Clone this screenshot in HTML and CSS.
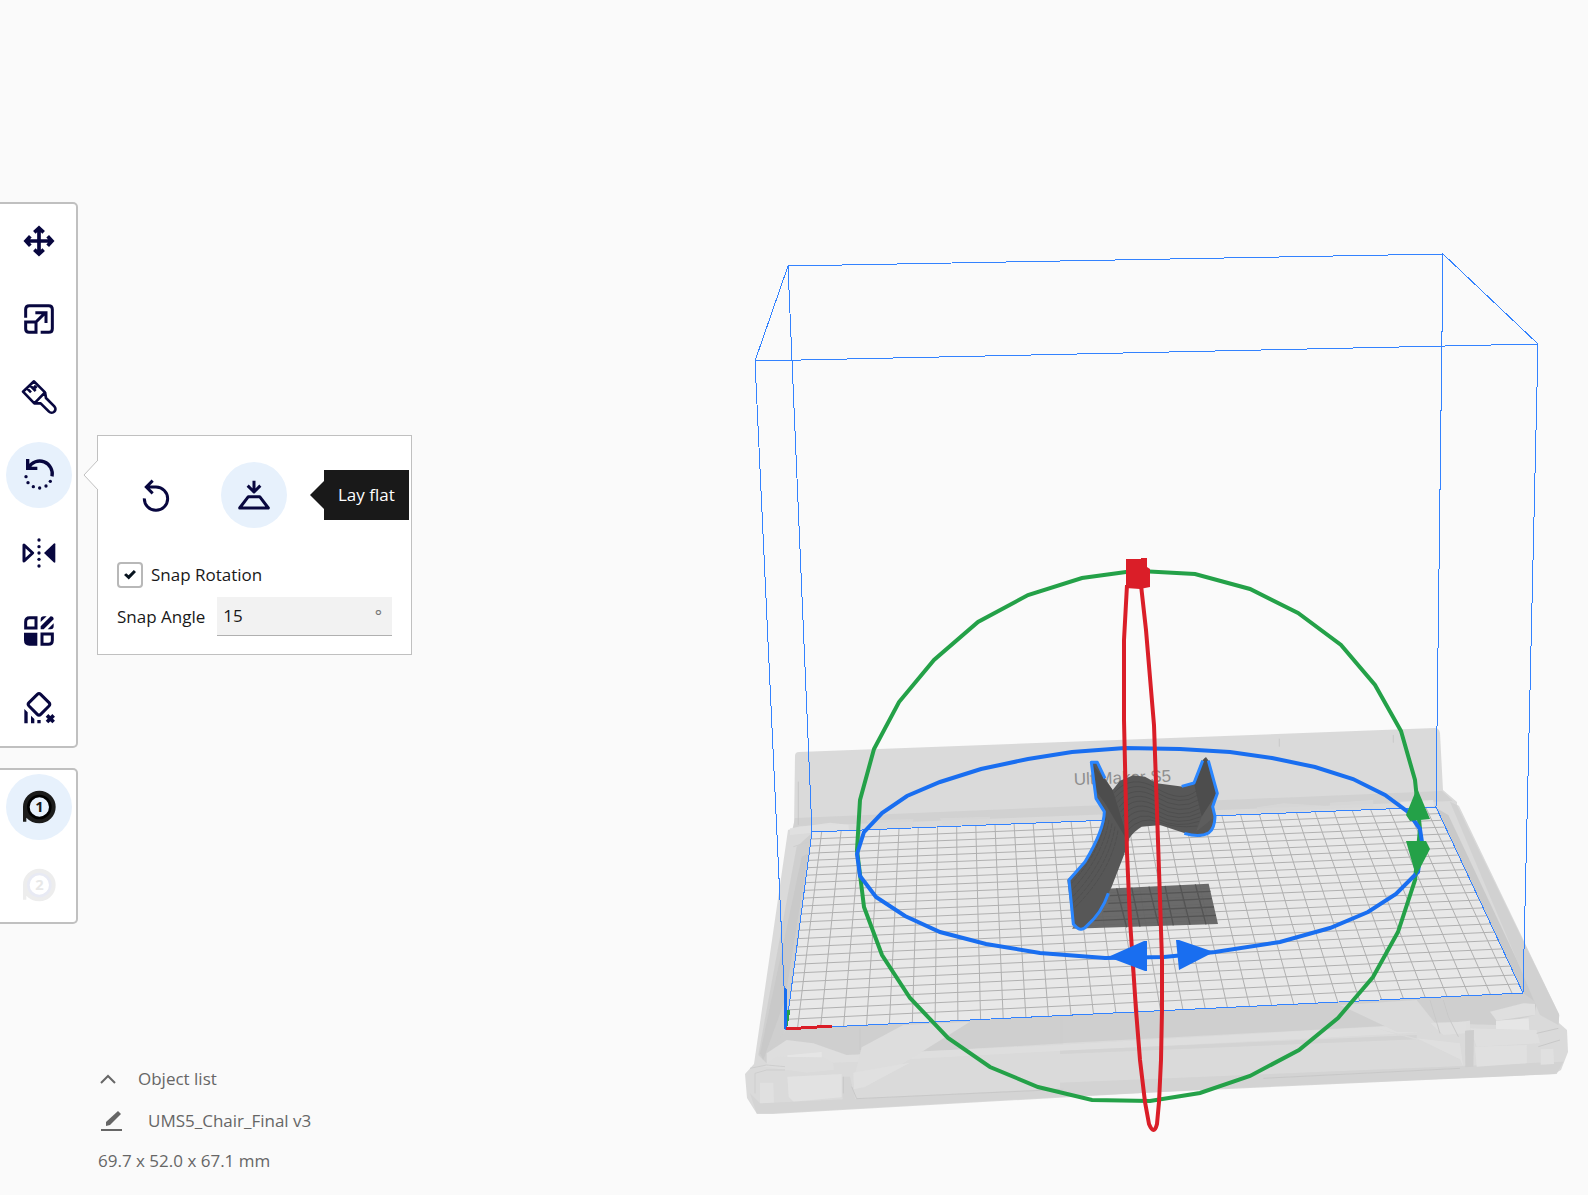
FILE: index.html
```html
<!DOCTYPE html>
<html lang="en">
<head>
<meta charset="utf-8">
<meta name="viewport" content="width=device-width, initial-scale=1">
<title>UMS5_Chair_Final v3</title>
<link rel="stylesheet" href="styles.css">
</head>
<body>
<main class="app">
  <svg class="scene" viewBox="0 0 1588 1195" preserveAspectRatio="xMaxYMid meet" role="img" aria-label="Build plate with model">
    <!-- printer body -->
    <path fill="#dadada" d="M795 756q0-4 4-4L1435 728q4 0 5 5L1443 790 1457 802 1457 812 788 840 794 828Z"/>
    <path fill="#d1d1d1" d="M795 818 1442 791 1452 800 1457 812 790 840Z"/>
    <path fill="#dadada" d="M788 830 800 826 1452 801 1459 806 1559 1014 1559 1023 1567 1030 1568 1052 1561 1070 1554 1074 1230 1088 773 1114 757 1114 747 1098 745 1074 754 1064Z"/>
    <g class="detail" transform="translate(730 700) scale(.33333)">
      <path fill="#cecece" d="M200 440 245 400 170 985 110 1090 85 1065Z"/>
      <path fill="#c7c7c7" d="M215 470 235 460 165 900 100 1080 90 1060Z"/>
      <path fill="#cecece" d="M170 988 1000 946 1000 1030 360 1068 170 1040 110 1060Z"/>
      <path fill="#dfdfdf" d="M110 1060 170 1020 250 1030 350 1065 1000 1034 1000 1052 400 1085 110 1095Z"/>
      <path fill="#e8e8e8" d="M172 1066 275 1056 276 1098 172 1102Z"/>
      <path fill="#e4e4e4" d="M172 1130 335 1122 335 1192 190 1205 176 1190Z"/>
      <path fill="#dedede" d="M280 1072 310 1090 312 1110 230 1118 100 1100 140 1070ZM395 1042 520 975 720 965 400 1165 370 1140Z"/>
      <path fill="#e2e2e2" d="M370 1118 540 1088 405 1160 372 1168ZM90 1148 130 1148 132 1216 90 1218Z"/>
      <path fill="#d3d3d3" d="M60 1180 90 1210 380 1196 1000 1165 1000 1190 130 1240 80 1240ZM338 1130 360 1130 375 1196 338 1200Z"/>
      <path fill="none" stroke="#c6c6c6" stroke-width="3" d="M205 245V375M365 1160 380 1196 1000 1168M340 1130V1180M390 985V1050"/>
      <path fill="#e2e2e2" d="M180 385 300 368 355 374 357 390 250 398 180 405Z"/>
      <path fill="#d8d8d8" d="M410 360 550 358 550 382 420 386ZM630 355 780 350 780 372 640 376Z"/>
      <path fill="none" stroke="#cdcdcd" stroke-width="3" d="M60 1105 110 1095 165 1100M75 1180V1120L110 1110H165M190 440 240 425"/>
    </g>
    <g class="detail" transform="translate(1230 700) scale(.33333)">
      <path fill="#c7c7c7" d="M620 325 655 345 920 905 915 935 880 880Z"/>
      <path fill="#d0d0d0" d="M660 305 680 315 988 945 985 975 930 945Z"/>
      <path fill="#cecece" d="M-510 946 880 880 915 905 915 945 800 975 620 970-510 1030Z"/>
      <path fill="#dfdfdf" d="M-510 1034 660 968 720 962 720 990-510 1054Z"/>
      <path fill="#d2d2d2" d="M-510 1052 560 1005 560 1018-510 1062ZM-510 1148 700 1098 1000 1085 980 1122-510 1190Z"/>
      <path fill="#dadada" d="M330 915 560 900 640 1000 500 995ZM440 985 700 1050 690 1080 560 1020Z"/>
      <path fill="#e9e9e9" d="M798 962 896 955 898 990 798 998Z"/>
      <path fill="#e2e2e2" d="M735 1040 890 1035 890 1090 740 1100ZM932 1048 970 1046 972 1092 932 1094Z"/>
      <path fill="#e0e0e0" d="M560 1015 690 1030 700 1100 690 1078ZM600 968 710 966 710 1000 640 1005ZM780 935 880 910 915 912 915 945 800 962ZM720 985 920 990 930 1030 740 1040Z"/>
      <path fill="#cbcbcb" d="M705 992 732 990 730 1100 706 1102Z"/>
      <path fill="none" stroke="#c6c6c6" stroke-width="3" d="M148 116V140M490 105V128M640 900 655 950 685 1010M600 900 630 1000M100 1135 690 1105M920 1000 985 985M925 1040 990 1020"/>
      <path fill="#d8d8d8" d="M80 322 160 310 300 318 300 308 430 300 430 320 80 336Z"/>
      <path fill="#e6e6e6" d="M510 305 610 300 612 318 520 326Z"/>
    </g>
    <text class="brand" x="1074" y="785" transform="rotate(-2 1074 785)">UltiMaker S5</text>

    <!-- build plate -->
    <path fill="#e8e8e8" d="M812 832 1435 807 1523 993 786 1029Z"/>
    <path id="grid" class="grid"/>
    <g class="volume">
      <path d="M788 266 1443 254 1538 344 755 361ZM812 832 1436 807 1523 993 786 1029ZM788 266 812 832M1443 254 1436 807M1538 344 1523 993M755 361 786 1029"/>
    </g>
    <g class="axes">
      <path stroke="#24a148" d="M786 1026 789 1010"/>
      <path stroke="#196ef0" d="M786 1029 785 988"/>
      <path stroke="#da1e28" d="M786 1029 832 1026"/>
    </g>

    <!-- model -->
    <g transform="translate(1050 720) scale(.33333)">
      <path fill="#636363" fill-opacity=".95" d="M150 507 476 491 504 612 66 626Z"/>
      <path fill="none" stroke="#545454" stroke-width="4" d="M200 505 230 622M245 503 270 620M297 500 326 617M345 498 370 616M390 495 420 614M436 493 468 613M180 527 481 514M175 550 485 536M160 575 492 561M130 602 498 586"/>
      <path fill="#575757" d="M122 124 142 124 165 175 188 210 210 182 250 166 285 170 320 190 400 200 432 190 458 120 468 111 476 122 504 220 490 260 497 290 482 335 450 350 405 340 330 315 275 320Q250 335 238 355L222 405 185 500 140 590 92 630 68 612 52 480 105 425 150 340 165 275 138 235Z"/>
      <path fill="#4d4d4d" d="M130 135 165 180 188 210 230 345 225 350 165 250 140 215ZM465 113 478 130 500 220 455 290 432 190Z"/>
      <path fill="#646464" d="M455 290 497 225 488 262 493 292 438 335Z" opacity=".5"/>
      <path fill="none" stroke="#4a4a4a" stroke-width="2" d="M192 218Q245 160 320 205T440 212M196 232Q248 175 320 218T442 226M201 248Q250 190 320 232T445 240M207 262Q252 205 320 246T447 254M212 276Q255 220 322 260T449 266M217 290Q258 236 322 273T451 278M222 304Q262 252 322 286T453 290M227 318Q268 270 324 298T448 304M231 332Q275 286 326 306T442 318"/>
      <path fill="none" stroke="#4c4c4c" stroke-width="2" stroke-dasharray="14 3" d="M168 290Q150 400 64 490M177 300Q158 410 66 510M186 310Q168 425 68 530M195 320Q176 440 70 548M204 332Q184 455 72 565"/>
      <g class="outline">
        <path d="M165 175 142 127 124 127 138 235 163 275Q162 330 105 425L57 480 70 612Q92 640 110 618 155 580 175 520"/>
        <path d="M395 199 432 189 458 122M475 122 502 220 488 260 495 290Q494 325 477 338 450 354 403 340"/>
      </g>
    </g>

    <!-- rotation gizmo -->
    <g class="ring">
      <path stroke="#24a148" d="M1126 572 1082 578 1028 595 978 622 934 660 899 702 874 749 860 800 857 850 864 907 882 955 910 998 948 1038 990 1067 1038 1087 1092 1100 1150 1101 1200 1093 1250 1076 1299 1050 1338 1018 1373 977 1398 932 1415 880 1420 829 1415 780 1401 731 1375 685 1341 645 1298 613 1250 589 1195 574 1140 571Z"/>
      <path stroke="#196ef0" d="M857 854 864 832 882 813 907 796 940 782 981 769 1028 759 1072 752 1125 748 1180 749 1230 752 1272 758 1315 767 1353 779 1385 795 1408 812 1420 829 1422 842 1418 872 1396 894 1368 912 1330 928 1280 942 1215 952 1164 957 1105 958 1040 953 986 944 940 932 905 916 876 897 860 876Z"/>
      <path stroke="#da1e28" d="M1127 585 1124 640 1124 720 1127 853 1130 920 1136 1010 1140 1060 1145 1102 1149 1124Q1154 1136 1157 1124L1159 1102 1161 1060 1162 1010 1162 960 1159 870 1154 725 1146 630 1141 585"/>
    </g>
    <path fill="#da1e28" d="M1126 559H1141V558H1147V567L1150 569V587L1140 589 1126 588Z"/>
    <path fill="#24a148" d="M1417 788 1430 819 1410 821 1406 815ZM1406 841H1426L1430 849 1416 876Z"/>
    <path fill="#196ef0" d="M1108 957 1144 941H1147V971H1145ZM1176 940H1179L1214 952 1179 970Z"/>
  </svg>

  <div class="workspace">
    <div class="sidebar">
      <nav class="rail" aria-label="Tools">
        <button class="tool" aria-label="Move">
          <svg class="icon" viewBox="0 0 120 120"><path stroke-width="11" d="M60 22V98M22 60H98M46 34 60 21 74 34M46 86 60 99 74 86M34 46 21 60 34 74M86 46 99 60 86 74"/></svg>
        </button>
        <button class="tool" aria-label="Scale">
          <svg class="icon" viewBox="0 0 120 120"><path stroke-width="9" d="M20 56V31Q20 20 31 20H89Q100 20 100 31V89Q100 100 89 100H65M20 69H51V100H30Q20 100 20 90ZM51 69 79 41M49 41H81V72"/></svg>
        </button>
        <button class="tool" aria-label="Paint">
          <svg class="icon" viewBox="0 0 120 120"><path stroke-width="8" stroke-linejoin="round" d="M45 13 12 44 46 79 78 46ZM46 79H65L90 104A11 11 0 0 0 106 88L81 63 78 46M24 34 36 46M33 25 50 42M45 26 53 33"/></svg>
        </button>
        <button class="tool active" aria-label="Rotate">
          <svg class="icon" viewBox="0 0 120 120"><path stroke-width="10" d="M99 64A38 38 0 0 0 29 37M26 12V40H55"/><g class="solid"><circle cx="21" cy="65" r="5"/><circle cx="27" cy="83" r="5"/><circle cx="43" cy="95" r="5"/><circle cx="62" cy="99" r="5"/><circle cx="81" cy="93" r="5"/><circle cx="94" cy="79" r="5"/></g></svg>
        </button>
        <button class="tool" aria-label="Mirror">
          <svg class="icon" viewBox="0 0 120 120"><path stroke-width="9" stroke-linejoin="round" d="M15 36V84L41 60Z"/><g class="solid"><path d="M75 60 104 32Q109 29 109 34V86Q109 91 104 88Z"/><circle cx="60" cy="21" r="5"/><circle cx="60" cy="41" r="5"/><circle cx="60" cy="60" r="5"/><circle cx="60" cy="79" r="5"/><circle cx="60" cy="99" r="5"/></g></svg>
        </button>
        <button class="tool" aria-label="Per model settings">
          <svg class="icon" viewBox="0 0 120 120"><path stroke-width="9" d="M20 32Q20 20 32 20H51V51H20ZM69 69H100V88Q100 100 88 100H69Z"/><path class="solid" d="M15 65H55V104H31Q15 104 15 88ZM65 33V26Q65 16 75 16H83ZM65 46 95 16Q104 16 104 25L74 55H65ZM86 55 104 37V46Q104 55 95 55Z"/></svg>
        </button>
        <button class="tool" aria-label="Support blocker">
          <svg class="icon" viewBox="0 0 120 120"><path stroke-width="9" d="M55 16Q60 11 65 16L90 41Q95 46 90 51L65 76Q60 81 55 76L30 51Q25 46 30 41Z"/><path stroke-width="11" d="M84 79 104 99M104 79 84 99"/><path class="solid" d="M16 60 26 70V103H16ZM36 80 46 90V103H36ZM55 93H65V103H55Z"/></svg>
        </button>
      </nav>
      <nav class="rail" aria-label="Extruders">
        <button class="tool spool active" aria-label="Extruder 1">
          <svg class="icon" viewBox="0 0 120 120"><path class="body" d="M12 60A49 49 0 1 1 61 109Q38 109 22 92V104H12Z"/><circle class="core" cx="61" cy="60" r="33"/><text x="61" y="76">1</text></svg>
        </button>
        <button class="tool spool" aria-label="Extruder 2" disabled>
          <svg class="icon" viewBox="0 0 120 120"><path class="body" d="M12 60A49 49 0 1 1 61 109Q38 109 22 92V104H12Z"/><circle class="core" cx="61" cy="60" r="33"/><text x="61" y="76">2</text></svg>
        </button>
      </nav>
    </div>

    <section class="panel" aria-label="Rotate">
      <svg class="pointer" viewBox="0 0 16 30" aria-hidden="true"><path d="M15 0 1 15 15 30"/></svg>
      <div class="actions">
        <button class="tool" aria-label="Reset">
          <svg class="icon" viewBox="0 0 120 120"><path stroke-width="9" d="M25 70A35 35 0 1 0 60 36H32M50 17 31 36 50 55"/></svg>
        </button>
        <button class="tool active" aria-label="Lay flat" aria-describedby="tip">
          <svg class="icon" viewBox="0 0 120 120"><path stroke-width="9" d="M60 17V50M41 32 60 51 79 32M43 65H77L103 99H17Z" stroke-linejoin="round"/></svg>
        </button>
        <div class="tooltip" id="tip" role="tooltip">Lay flat</div>
      </div>
      <label class="check"><input type="checkbox" checked>Snap Rotation</label>
      <div class="field">
        <label for="angle">Snap Angle</label>
        <div class="entry"><input id="angle" type="text" value="15"><span class="unit">°</span></div>
      </div>
    </section>
  </div>

  <footer class="objects">
    <button class="row toggle">
      <svg class="chevron" viewBox="0 0 20 20" aria-hidden="true"><path d="M3 14 10 7 17 14"/></svg>
      Object list
    </button>
    <button class="row name">
      <svg class="pencil" viewBox="0 0 26 26" aria-hidden="true"><path d="M3 22H24" stroke-width="2"/><path d="M8 18V14L20 3 23 6 12 17Z" fill="#666" stroke="none"/></svg>
      UMS5_Chair_Final v3
    </button>
    <p class="row">69.7 x 52.0 x 67.1 mm</p>
  </footer>
</main>
<script src="grid.js"></script>
</body>
</html>
```
FILE: styles.css
```css
* { box-sizing: border-box; }

body {
  margin: 0;
  background: #fafafa;
  color: #191919;
  font: 17px/24px "Open Sans", "Noto Sans", sans-serif;
}

button, input { font: inherit; color: inherit; }
button { border: 0; padding: 0; background: none; cursor: pointer; }

.app {
  position: relative;
  display: flex;
  flex-direction: column;
  justify-content: space-between;
  min-height: 100vh;
}

/* 3D view behind the controls */
.scene { position: absolute; inset: 0; width: 100%; height: 100%; }
.brand { font: 17px "Liberation Sans", sans-serif; fill: #8e8e8e; }
.detail { opacity: .85; }
.grid { fill: none; stroke: #b0b0b0; stroke-width: 1; }
.volume path { fill: none; stroke: #3282ff; stroke-width: 1; shape-rendering: crispEdges; }
.axes path { fill: none; stroke-width: 3; shape-rendering: crispEdges; }
.ring path { fill: none; stroke-width: 4; }
.outline path { fill: none; stroke: #2a86ff; stroke-width: 9; stroke-linejoin: round; }

.workspace {
  position: relative;
  display: flex;
  align-items: flex-start;
  gap: 19px;
  padding-top: 202px;
}

.sidebar { display: flex; flex-direction: column; gap: 20px; }

.rail {
  display: flex;
  flex-direction: column;
  gap: 12px;
  padding: 4px 4px 4px 6px;
  background: #fff;
  border: 2px solid #c0c0c0;
  border-left: 0;
  border-radius: 0 5px 5px 0;
}

.tool {
  display: grid;
  flex: none;
  place-items: center;
  width: 66px;
  height: 66px;
  border-radius: 50%;
}
.tool.active { background: #e7f1fc; }

.icon { width: 40px; height: 40px; fill: none; stroke: #08073f; }
.icon .solid { fill: #08073f; stroke: none; }

.spool .icon { stroke: none; }
.spool .body { fill: #1c1c1b; }
.spool .core { fill: #e7f1fc; stroke: #000; stroke-width: 8px; }
.spool text { font-size: 44px; font-weight: 700; text-anchor: middle; fill: #191919; }
.spool:disabled .body { fill: #ededed; }
.spool:disabled .core { fill: #fff; stroke: #e8eaf4; }
.spool:disabled text { fill: #e8e8e8; }

.panel {
  position: relative;
  width: 315px;
  margin-top: 233px;
  padding: 26px 19px 18px;
  background: #fff;
  border: 1px solid #c0c0c0;
}
.pointer {
  position: absolute;
  left: -15px;
  top: 24px;
  width: 16px;
  height: 30px;
  fill: #fff;
  stroke: #c0c0c0;
}

.actions { display: flex; align-items: center; gap: 32px; padding-left: 6px; }

.tooltip {
  position: relative;
  flex: none;
  margin-left: 5px;
  padding: 13px 14px;
  background: #191919;
  color: #fff;
}
.tooltip::before {
  content: "";
  position: absolute;
  right: 100%;
  top: 11px;
  border: 14px solid transparent;
  border-left: 0;
  border-right-color: #191919;
}

.check { display: flex; align-items: center; gap: 8px; margin-top: 34px; }
.check input {
  display: grid;
  place-items: center;
  appearance: none;
  width: 26px;
  height: 26px;
  margin: 0;
  border: 2px solid #b8b8b8;
  border-radius: 4px;
  background: #fff;
}
.check input:checked::before {
  content: "";
  width: 12px;
  height: 10px;
  background: #08141f;
  clip-path: polygon(0 50%, 18% 32%, 38% 52%, 82% 0, 100% 20%, 40% 96%);
}

.field { display: flex; align-items: center; gap: 12px; margin-top: 9px; }
.field label { flex: none; }
.entry {
  display: flex;
  flex: 1;
  min-width: 0;
  height: 39px;
  padding: 0 10px 0 6px;
  background: #f2f2f2;
  border-bottom: 1px solid #b0b0b0;
}
.entry input { flex: 1; min-width: 0; padding: 0; border: 0; outline: 0; background: none; }
.unit { line-height: 38px; color: #777; }

.objects {
  position: relative;
  display: flex;
  flex-direction: column;
  align-items: flex-start;
  gap: 16px;
  padding: 0 0 22px 98px;
  color: #666;
}
.row { display: flex; align-items: center; height: 24px; margin: 0; }
.row svg { fill: none; stroke: #666; }
.toggle { gap: 20px; height: 28px; }
.name { gap: 24px; }
.chevron { width: 20px; height: 20px; stroke-width: 2; }
.pencil { width: 26px; height: 26px; }
```
FILE: grid.js
```js
// Projects the 330 x 240 mm plate grid onto the plate's four corners.
(function () {
  var a = [812, 832], b = [1435, 807], c = [1523, 993], d = [786, 1029];
  var dx1 = b[0] - c[0], dx2 = d[0] - c[0], sx = a[0] - b[0] + c[0] - d[0];
  var dy1 = b[1] - c[1], dy2 = d[1] - c[1], sy = a[1] - b[1] + c[1] - d[1];
  var det = dx1 * dy2 - dx2 * dy1;
  var g = (sx * dy2 - dx2 * sy) / det;
  var h = (dx1 * sy - sx * dy1) / det;

  function point(u, v) {
    var w = g * u + h * v + 1;
    var x = (b[0] - a[0] + g * b[0]) * u + (d[0] - a[0] + h * d[0]) * v + a[0];
    var y = (b[1] - a[1] + g * b[1]) * u + (d[1] - a[1] + h * d[1]) * v + a[1];
    return (x / w).toFixed(1) + " " + (y / w).toFixed(1);
  }

  var path = "";
  for (var i = 0; i < 33; i++) {
    var u = (i + 0.5) / 33;
    path += "M" + point(u, 0) + "L" + point(u, 1);
  }
  for (var j = 1; j < 24; j++) {
    path += "M" + point(0, j / 24) + "L" + point(1, j / 24);
  }
  document.getElementById("grid").setAttribute("d", path);
})();
```
